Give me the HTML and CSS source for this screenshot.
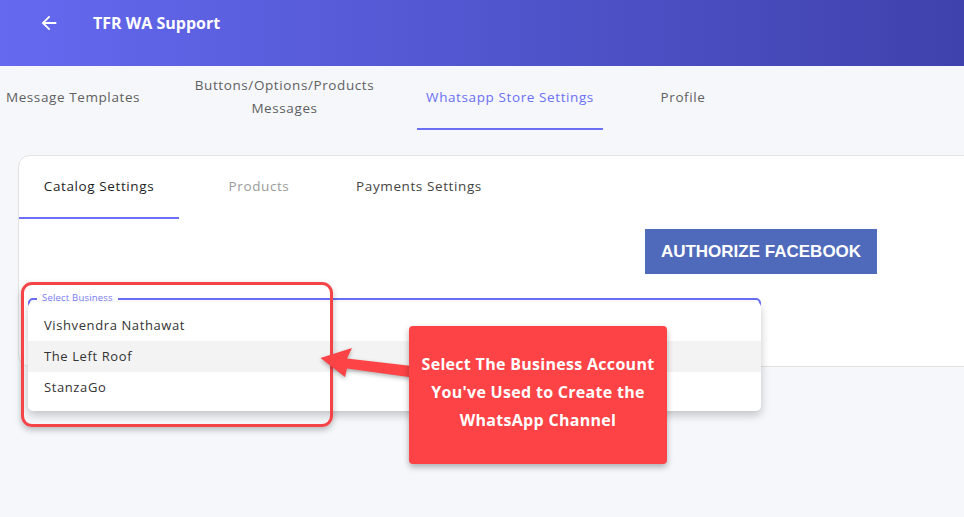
FILE: index.html
```html
<!DOCTYPE html>
<html lang="en">
<head>
  <meta charset="UTF-8" />
  <meta name="viewport" content="width=device-width, initial-scale=1.0" />
  <title>TFR WA Support</title>
  <link rel="stylesheet" href="styles.css">
</head>
<body>
  <div class="page">
    <header class="topbar">
      <svg class="back" viewBox="0 0 24 24" width="22" height="22"><path fill="#fff" d="M20 11H7.83l5.59-5.59L12 4l-8 8 8 8 1.41-1.41L7.83 13H20v-2z"/></svg>
      <span class="title">TFR WA Support</span>
    </header>

    <nav class="main-tabs">
      <div class="tab tab-1">Message Templates</div>
      <div class="tab tab-2"><span class="wrap">Buttons/Options/Products Messages</span></div>
      <div class="tab tab-3 active">Whatsapp Store Settings</div>
      <div class="tab tab-4">Profile</div>
    </nav>

    <section class="card">
      <div class="card-tabs">
        <div class="ctab active">Catalog Settings</div>
        <div class="ctab muted">Products</div>
        <div class="ctab">Payments Settings</div>
      </div>
      <div class="card-body">
        <div class="auth-row">
          <button class="fb-btn">AUTHORIZE FACEBOOK</button>
        </div>
        <div class="field">
          <span class="field-label">Select Business</span>
          <ul class="menu">
            <li class="item">Vishvendra Nathawat</li>
            <li class="item hover">The Left Roof</li>
            <li class="item">StanzaGo</li>
          </ul>
        </div>
      </div>
    </section>

    <div class="highlight"></div>
    <svg class="pointer" width="100" height="45" viewBox="0 0 100 45">
      <polygon fill="#fd4346" points="4.5,18 36,8 31,18.5 100,26.5 100,38 31,28.5 29,37"/>
    </svg>
    <div class="callout">Select The Business Account You've Used to Create the WhatsApp Channel</div>
  </div>
</body>
</html>
```

FILE: styles.css
```css
html, body {
  margin: 0;
  padding: 0;
}
body {
  background-color: #f5f7fb;
  font-family: 'Open Sans', sans-serif;
  overflow: hidden;
  width: 964px;
  height: 517px;
}
.page {
  position: relative;
  height: 517px;
}
.topbar {
  height: 66px;
  display: flex;
  align-items: center;
  padding-left: 38px;
  background: linear-gradient(90deg, #6469f0, #3f42ac);
  box-sizing: border-box;
}
.back {
  margin-top: -20px;
}
.title {
  color: #fff;
  font-weight: 700;
  font-size: 16px;
  margin-left: 33px;
  margin-top: -20px;
}
.main-tabs {
  display: flex;
  height: 64px;
}
.tab {
  display: flex;
  align-items: center;
  justify-content: center;
  text-align: center;
  font-size: 13.5px;
  letter-spacing: 0.6px;
  color: #5f5f5f;
  line-height: 23px;
  box-sizing: border-box;
  padding-bottom: 2px;
}
.tab-1 { width: 146px; }
.tab-2 { width: 271px; padding-left: 6px; }
.tab-3 { width: 186px; }
.tab-4 { width: 160px; }
.wrap {
  display: block;
  width: 200px;
}
.tab.active {
  color: #6c70f5;
  border-bottom: 2px solid #6c70f5;
  padding-bottom: 0;
}
.card {
  margin: 25px 0 0 18px;
  width: 980px;
  height: 212px;
  background: #fff;
  border: 1px solid #e2e2e2;
  border-radius: 12px;
  box-sizing: border-box;
}
.card-tabs {
  display: flex;
  height: 63px;
}
.ctab {
  width: 160px;
  display: flex;
  align-items: center;
  justify-content: center;
  font-size: 13.5px;
  letter-spacing: 0.6px;
  color: #444;
  box-sizing: border-box;
  padding-bottom: 4px;
}
.ctab.active {
  color: #1f1f1f;
  border-bottom: 2px solid #6c70f5;
  padding-bottom: 2px;
}
.ctab.muted {
  color: #9a9a9a;
}
.card-body {
  padding: 10px 0 0 9px;
}
.auth-row {
  display: flex;
  justify-content: flex-end;
  width: 849px;
}
.fb-btn {
  width: 232px;
  height: 45px;
  border: none;
  background-color: #4f6aba;
  color: #fff;
  font-family: 'Liberation Sans', Arial, sans-serif;
  font-weight: bold;
  font-size: 17px;
  padding: 0;
}
.field {
  position: relative;
  margin-top: 24px;
  width: 733px;
  height: 40px;
  border: 2px solid #6a6ef5;
  border-radius: 5px;
  box-sizing: border-box;
}
.field-label {
  position: absolute;
  left: 7px;
  top: -9px;
  padding: 0 5px;
  background: #fff;
  font-size: 9.5px;
  letter-spacing: 0.2px;
  color: #7b7ef5;
  line-height: 14px;
}
.menu {
  position: absolute;
  left: -2px;
  top: 2px;
  width: 733px;
  margin: 0;
  padding: 8px 0;
  list-style: none;
  background: #fff;
  border-radius: 5px;
  box-shadow: 0 4px 10px rgba(0, 0, 0, 0.22);
}
.item {
  height: 31px;
  line-height: 31px;
  padding-left: 16px;
  font-size: 13px;
  letter-spacing: 0.6px;
  color: #333;
}
.item.hover {
  background: #f3f3f3;
}
.highlight {
  position: absolute;
  left: 21px;
  top: 282px;
  width: 312px;
  height: 145px;
  border: 3px solid #f44448;
  border-radius: 11px;
  box-sizing: border-box;
  box-shadow: 0 3px 6px rgba(0, 0, 0, 0.25);
}
.pointer {
  position: absolute;
  left: 316px;
  top: 340px;
  filter: drop-shadow(0 2px 2px rgba(0, 0, 0, 0.3));
}
.callout {
  position: absolute;
  left: 409px;
  top: 326px;
  width: 258px;
  height: 138px;
  box-sizing: border-box;
  padding: 24px 4px 0;
  background: #fd4346;
  border-radius: 4px;
  box-shadow: 0 3px 6px rgba(0, 0, 0, 0.3);
  color: #fff;
  font-weight: 700;
  font-size: 16px;
  letter-spacing: 0.3px;
  line-height: 28px;
  text-align: center;
}
```
